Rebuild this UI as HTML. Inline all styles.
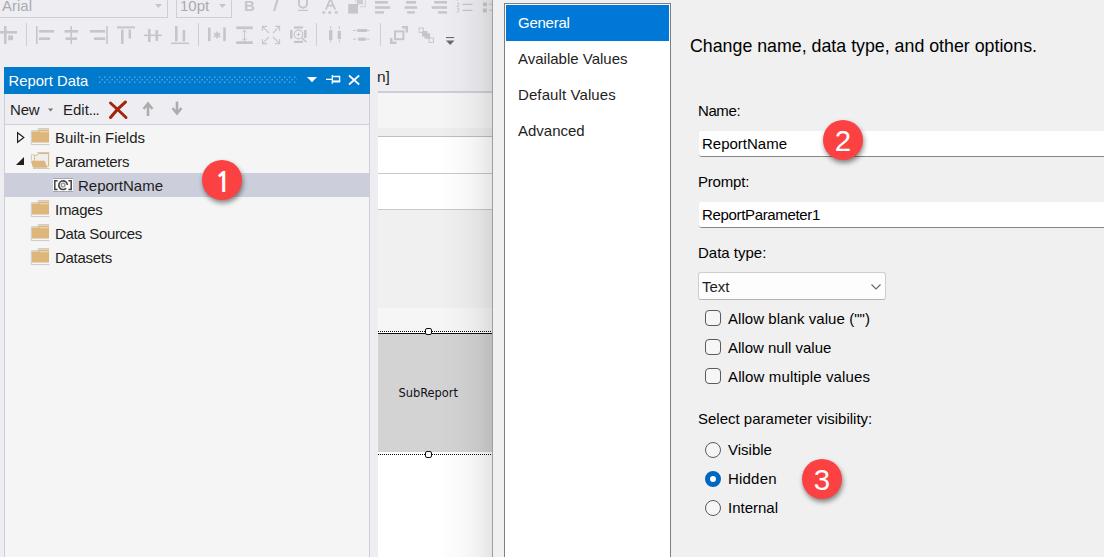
<!DOCTYPE html>
<html><head><meta charset="utf-8">
<style>
*{box-sizing:border-box;margin:0;padding:0}
html,body{width:1104px;height:557px;overflow:hidden;background:#eeeef2;font-family:"Liberation Sans",sans-serif;color:#1e1e1e}
.abs{position:absolute}
#root{position:relative;width:1104px;height:557px;overflow:hidden;background:#eeeef2}
svg{position:absolute;left:0;top:0;overflow:visible}
.combo{position:absolute;border:1px solid #ccceda;color:#a9aab4;white-space:nowrap}
#panel{position:absolute;left:4px;top:67px;width:366px;height:500px;border-left:1px solid #ccceda;border-right:1px solid #ccceda;background:#f5f5f5}
#phead{position:absolute;left:-1px;top:0;width:366px;height:27px;background:#007acc;color:#fff;font-size:14.8px;line-height:29px;padding-left:4.5px;white-space:nowrap}
#ptool{position:absolute;left:0;top:27px;width:364px;height:31px;background:#eeeef2;border-bottom:1px solid #ccceda;font-size:15px}
.row{position:absolute;left:0;width:364px;height:24px;font-size:15px;line-height:24px}
.row span{position:absolute;top:1px;white-space:nowrap}
.sel{background:#cccedb}
#dlg{position:absolute;left:492px;top:-10px;width:640px;height:600px;background:#f0f0f0;border-left:1px solid #a0a0a0}
#list{position:absolute;left:504px;top:3px;width:167px;height:600px;border:1px solid #7a7f8a;background:#fff}
.li{position:absolute;left:1px;width:163px;height:36px;line-height:36px;font-size:15px;padding-left:12px;white-space:nowrap}
.lbl{position:absolute;color:#000;font-size:15px;white-space:nowrap;line-height:18px}
.inp{color:#000;position:absolute;left:699px;width:420px;height:26px;background:#fff;border-bottom:1px solid #868686;border-radius:3px 0 0 3px;font-size:15px;line-height:25px;padding-left:3px;white-space:nowrap}
.cb{position:absolute;left:705px;width:16px;height:16px;border:1px solid #5a5a5a;border-radius:4px;background:#f6f6f6}
.rb{position:absolute;left:705px;width:16px;height:16px;border:1px solid #5a5a5a;border-radius:50%;background:#f6f6f6}
.badge{position:absolute;border-radius:50%;background:#fb4141;color:#fff;text-align:center;box-shadow:1px 3px 5px rgba(0,0,0,.45);font-size:29.5px}
</style></head><body><div id="root">

<!-- top toolbar row 1 -->
<div class="combo" style="left:-2px;top:-6px;width:170px;height:24px;padding-left:4px;font-size:15px;line-height:21px;padding-left:3px">Arial</div>
<div class="combo" style="left:176px;top:-6px;width:56px;height:24px;padding-left:3px;font-size:15px;line-height:21px">10pt</div>
<div class="abs" style="left:244px;top:-4px;font-size:15px;font-weight:bold;color:#c6c6ca;line-height:20px">B</div>

<svg width="500" height="56" viewBox="0 0 500 56">
 <g fill="#c5c5cb" stroke="none">
  <!-- combo arrows -->
  <path d="M155 4h7l-3.5 4z"/><path d="M219 4h7l-3.5 4z"/>
  <!-- I slash -->
  <path d="M276.6 -1h2.2l-3.6 12h-2.2z"/>
  <!-- U -->
  <path d="M299 -1v4.700a4 4 0 0 0 8 0v-4.700" fill="none" stroke="#c5c5cb" stroke-width="1.900"/><rect x="298" y="9.800" width="10" height="1.200"/>
  <!-- A -->
  <path d="M325.800 9.600l4.700-11 4.700 11M327.600 5.600h5.800" fill="none" stroke="#c5c5cb" stroke-width="1.700"/>
  <rect x="322.400" y="11.300" width="2.800" height="2.400"/><rect x="328.400" y="11.300" width="2.800" height="2.400"/><rect x="334.900" y="11.300" width="2.800" height="2.400"/>
  <!-- fill squares -->
  <rect x="348.200" y="4" width="9.800" height="9.600"/>
  <path d="M355.400 -1h10.400v8.200h-6v-1h5v-6.200h-8.400v2.500h-1z" opacity=".75"/><rect x="357" y="-1" width="6" height="5.400" opacity=".85"/>
  <!-- align left -->
  <rect x="375" y="1" width="13" height="2.6"/><rect x="375" y="6.2" width="15.2" height="2.6"/><rect x="375" y="11.2" width="9" height="2.4"/>
  <!-- align center -->
  <rect x="406" y="1" width="10" height="2.6"/><rect x="404.6" y="6.2" width="12.6" height="2.6"/><rect x="407.2" y="11.2" width="7.8" height="2.4"/>
  <!-- align right -->
  <rect x="434.2" y="1" width="12.8" height="2.6"/><rect x="431.6" y="6.2" width="15.4" height="2.6"/><rect x="438" y="11.2" width="9" height="2.4"/>
  <!-- numbered list -->
  <rect x="462.5" y="3.8" width="10" height="1.2"/><rect x="462.5" y="9.8" width="10" height="1.2"/>
  <!-- bullet list -->
  <rect x="483" y="2.6" width="3.8" height="3.6"/><rect x="483" y="8.6" width="3.8" height="3.8"/>
  <rect x="489.5" y="3.8" width="4" height="1.2"/><rect x="489.5" y="9.8" width="4" height="1.2"/>

  <!-- row 2 -->
  <!-- icon 1 partial -->
  <rect x="4" y="26" width="2.6" height="18"/><rect x="0" y="31" width="17" height="2.6"/><rect x="8.2" y="35.4" width="4.8" height="4.8"/>
  <!-- align lefts -->
  <rect x="36" y="26" width="1.6" height="18"/><rect x="39" y="30" width="15" height="2.6"/><rect x="39" y="37.4" width="11" height="2.6"/>
  <!-- align centers -->
  <rect x="70.4" y="26" width="1.6" height="18"/><rect x="64.5" y="30" width="13.5" height="2.6"/><rect x="65.6" y="37.4" width="11.4" height="2.6"/>
  <!-- align rights -->
  <rect x="106.2" y="26" width="1.6" height="18"/><rect x="90" y="30" width="15.2" height="2.6"/><rect x="94" y="37.4" width="11.2" height="2.6"/>
  <!-- align tops -->
  <rect x="117" y="26.4" width="18" height="2"/><rect x="121" y="29.5" width="2.6" height="14.5"/><rect x="128.6" y="29.5" width="2.4" height="9"/>
  <!-- align middles -->
  <rect x="144" y="34.5" width="18" height="1.6"/><rect x="148" y="29" width="2.6" height="13"/><rect x="155.5" y="30" width="2.6" height="11"/>
  <!-- align bottoms -->
  <rect x="175" y="26" width="2.6" height="15.4"/><rect x="182.6" y="30" width="2.6" height="11.4"/><rect x="171" y="42.5" width="18" height="1.6"/>
  <!-- |*| -->
  <rect x="208" y="27.5" width="2.6" height="13.6"/><rect x="223.2" y="27.5" width="2.6" height="13.6"/>
  <!-- I-beam -->
  <rect x="236.2" y="26.4" width="16.6" height="2.8"/><rect x="236.2" y="41.2" width="16.6" height="2.8"/>
  <!-- zoom icon bars -->
  <rect x="294" y="26.4" width="9" height="2.2"/><rect x="294" y="40.8" width="9" height="2.2"/><rect x="290" y="30" width="2.6" height="8.6"/><rect x="304" y="30" width="2.6" height="8"/>
  <!-- distribute h -->
  <rect x="329" y="30" width="3.4" height="10"/><rect x="337.6" y="31" width="3.4" height="8"/>
  <!-- distribute v -->
  <rect x="357.2" y="29" width="9.8" height="3"/><rect x="358.4" y="37.6" width="7.4" height="3.2"/>
  <!-- send back -->
  <rect x="422" y="31" width="5.500" height="5.500"/><rect x="424.600" y="33.200" width="5.500" height="5.500"/>
 </g>
 <g fill="none" stroke="#c5c5cb">
  <!-- separators -->
  <path d="M26.5 23v23M198.5 23v23M316.5 23v23M380.5 23v23" stroke="#ccceda" stroke-width="1"/>
  <!-- asterisk -->
  <path d="M217 31.5v7M213.8 33.2l6.4 3.6M220.2 33.2l-6.4 3.6" stroke-width="1.7"/>
  <!-- I-beam arrow -->
  <path d="M244.5 30v10.5M242.3 32.4l2.2-2.4 2.2 2.4M242.3 38.4l2.2 2.4 2.2-2.4" stroke-width="1"/>
  <!-- expand arrows -->
  <path d="M269 33l-6.4-6.4M262.4 31v-4.6h4.6M273 33l6.4-6.4M275 26.4h4.6v4.6M269 37l-6.4 6.4M262.4 39v4.6h4.6M273 37l6.4 6.4M275 43.6h4.6v-4.6" stroke-width="1.1"/>
  <!-- magnifier -->
  <circle cx="298.5" cy="34.5" r="4.3" stroke-width="1.2"/><path d="M301.8 37.8l4.6 4.4" stroke-width="1.6"/><path d="M296.5 34.5h4M298.5 32.5v4" stroke-width="1"/>
  <!-- distribute dashed lines -->
  <path d="M330.7 26v18M339.3 26v18" stroke-width="1" stroke-dasharray="3 1.5"/>
  <path d="M353 30.5h18M353 39.2h18" stroke-width="1" stroke-dasharray="3 1.5"/>
  <!-- bring to front -->
  <rect x="395" y="31.4" width="8.4" height="7.8" stroke-width="2"/>
  <path d="M402 27.200h4.800v5.300M396.500 42.800h-5.300v-4.800" stroke-width="2.500"/>
  <!-- send back outlines -->
  <rect x="419" y="28" width="4.4" height="4.4" stroke-width="1"/><rect x="429" y="38" width="4.4" height="4.4" stroke-width="1"/>
  <!-- numbered list digits -->
  <path d="M457.300 0v.8M457 3.600c1-1.100 2.600-.4 1.700.9l-1.700 1.900h2.300M457 8.800h2.100l-1.100 1.500c1.700 0 1.500 2.400-1.200 1.700" stroke-width=".9"/>
 </g>
 <!-- overflow -->
 <rect x="446" y="37" width="8.200" height="1.100" fill="#6a6b70"/><path d="M446 40.600h8.400l-4.200 4.400z" fill="#6a6b70"/>
</svg>

<!-- Report Data panel -->
<div id="panel">
  <div id="phead">Report Data</div>
  <div id="ptool"><span class="abs" style="left:5px;top:7px;letter-spacing:-.2px">New</span><span class="abs" style="left:58px;top:7px">Edit<span style="letter-spacing:-.9px">...</span></span></div>
  <div class="row" style="top:58px"><span style="left:50px">Built-in Fields</span></div>
  <div class="row" style="top:82px"><span style="left:50px;letter-spacing:-.35px">Parameters</span></div>
  <div class="row sel" style="top:106px"><span style="left:73px">ReportName</span></div>
  <div class="row" style="top:130px"><span style="left:50px;letter-spacing:-.27px">Images</span></div>
  <div class="row" style="top:154px"><span style="left:50px;letter-spacing:-.33px">Data Sources</span></div>
  <div class="row" style="top:178px"><span style="left:50px;letter-spacing:-.29px">Datasets</span></div>
</div>

<svg width="380" height="300" viewBox="0 0 380 300">
 <defs>
  <pattern id="grip" x="99" y="76" width="5" height="5" patternUnits="userSpaceOnUse">
   <rect x="0" y="0.5" width="1.4" height="1.4" fill="#58aae4"/><rect x="2.5" y="3" width="1.4" height="1.4" fill="#58aae4"/>
  </pattern>
  <g id="folder">
   <path d="M-.2 15.500v-13.700h5.400l1.700-2.200h10.800M-.2 15.600h17.900" fill="none" stroke="#c9c9cc" stroke-width="1"/>
   <path d="M.5 2.600h5.200l1.600-2.200h10.200v13.200h-17z" fill="#dcb67a"/>
   <path d="M8 2.700h9" stroke="#efdcbb" stroke-width="1" fill="none"/>
  </g>
 </defs>
 <!-- grip -->
 <rect x="99" y="76" width="198" height="8" fill="url(#grip)"/>
 <!-- header icons -->
 <path d="M307 77h10l-5 5.2z" fill="#fff"/>
 <path d="M326 79.3h5.6M332.3 75v8.8M333 76.5h6.6v5.2" fill="none" stroke="#fff" stroke-width="1.3"/><rect x="333" y="80.4" width="7.2" height="2.1" fill="#fff"/>
 <path d="M349 75.5l10.2 9M359.2 75.5l-10.2 9" stroke="#fff" stroke-width="1.7" fill="none"/>
 <!-- toolbar icons -->
 <path d="M48 108.500h5.200l-2.600 2.900z" fill="#717171"/>
 <path d="M110.5 103c5 4.500 10 9 15.500 14.500M125.500 102c-5 4-10 9-15 15.500" stroke="#a1260d" stroke-width="3" stroke-linecap="round" fill="none"/>
 <path d="M148 116v-12M143.500 109l4.500-5.500 4.500 5.500" stroke="#adadad" stroke-width="2.600" fill="none"/>
 <path d="M177 101.500v12M172.500 108l4.500 5.500 4.500-5.500" stroke="#adadad" stroke-width="2.600" fill="none"/>
 <!-- expanders -->
 <path d="M17.600 132.700l6.200 4.800-6.200 4.800z" fill="#fff" stroke="#1e1e1e" stroke-width="1.200"/>
 <path d="M24 157v8h-8z" fill="#1e1e1e"/>
 <!-- folders -->
 <use href="#folder" x="31.500" y="129"/>
 <use href="#folder" x="31.500" y="201"/>
 <use href="#folder" x="31.500" y="225"/>
 <use href="#folder" x="31.500" y="249"/>
 <!-- open folder -->
 <path d="M31.300 160v-5.300h2.600M33 168.500h16.500M37 152.500h12.500" fill="none" stroke="#c9c9cc" stroke-width="1"/>
 <path d="M34.300 155.200h2.900l1.400-1.700h10v12.800h-14.300z" fill="#f0eeea" stroke="#dcb67a" stroke-width="1"/>
 <path d="M30.800 160.700h13.900l2.500 7h-14.200z" fill="#dcb67a"/>
 <!-- param icon -->
 <rect x="53" y="178.500" width="20" height="13" fill="#fff"/><path d="M53 178.500h20M53 191.500h20" stroke="#a4a6b0" stroke-width="1"/>
 <path d="M57.600 180.700h-2.800v8.800h2.800M68.400 180.700h2.800v8.800h-2.800" fill="none" stroke="#424242" stroke-width="1.500"/>
 <path d="M66.200 188.200a4.300 4.300 0 1 1 1.200-3.200" fill="none" stroke="#424242" stroke-width="1.600"/>
 <circle cx="63.100" cy="185" r="2.600" fill="#9c9c9c"/><circle cx="63.100" cy="185.100" r="1.100" fill="#fff"/>
</svg>

<!-- middle designer -->
<div class="abs" style="left:377px;top:68px;font-size:15.5px;line-height:18px">n]</div>
<div class="abs" style="left:378px;top:91px;width:114px;height:2px;background:#ccceda"></div>
<div class="abs" style="left:378px;top:93px;width:114px;height:35px;background:#f5f5f5"></div>
<div class="abs" style="left:378px;top:128px;width:114px;height:8px;background:#eeeeee"></div>
<div class="abs" style="left:378px;top:136px;width:114px;height:74px;background:#fff;border-top:1px solid #bdbdbd;border-bottom:1px solid #c8c8c8"></div>
<div class="abs" style="left:378px;top:173px;width:114px;height:1px;background:#c8c8c8"></div>
<div class="abs" style="left:378px;top:210px;width:114px;height:98px;background:#f0f0f0"></div>
<div class="abs" style="left:378px;top:308px;width:114px;height:24px;background:#f6f6f6"></div>
<div class="abs" style="left:378px;top:332px;width:114px;height:1px;background:#fff"></div>
<div class="abs" style="left:378px;top:331px;width:114px;height:1px;background:repeating-linear-gradient(90deg,#111 0 1px,transparent 1px 2px)"></div>
<div class="abs" style="left:378px;top:333px;width:114px;height:1px;background:#111"></div>
<div class="abs" style="left:378px;top:334px;width:114px;height:118px;background:#d3d3d3"></div>
<div class="abs" style="left:378px;top:452px;width:114px;height:110px;background:#fff"></div>
<div class="abs" style="left:378px;top:454px;width:114px;height:1px;background:repeating-linear-gradient(90deg,#111 0 1px,transparent 1px 2px)"></div>
<div class="abs" style="left:425px;top:328px;width:7px;height:7px;background:#fff;border:1px solid #111;border-radius:2px"></div>
<div class="abs" style="left:425px;top:451px;width:7px;height:7px;background:#fff;border:1px solid #111;border-radius:2px"></div>
<div class="abs lbl2" style="left:398.500px;top:385px;font-size:12.700px;line-height:16px;font-family:'DejaVu Sans Condensed','DejaVu Sans',sans-serif;color:#101018;white-space:nowrap">SubReport</div>

<!-- dialog shadow -->
<div class="abs" style="left:440px;top:0;width:52px;height:557px;background:linear-gradient(90deg,rgba(0,0,0,0),rgba(0,0,0,.02) 40%,rgba(0,0,0,.055) 75%,rgba(0,0,0,.105))"></div>
<div id="dlg"></div>
<div id="list">
  <div class="li" style="top:1px;background:#0078d7;color:#fff;letter-spacing:-.25px">General</div>
  <div class="li" style="top:37px">Available Values</div>
  <div class="li" style="top:73px;letter-spacing:.1px">Default Values</div>
  <div class="li" style="top:109px">Advanced</div>
</div>
<div class="lbl" style="left:690px;top:36px;font-size:17.8px;line-height:20px">Change name, data type, and other options.</div>
<div class="lbl" style="left:698px;top:102px;letter-spacing:-.4px">Name:</div>
<div class="inp" style="top:131px">ReportName</div>
<div class="lbl" style="left:698px;top:173px;letter-spacing:-.2px">Prompt:</div>
<div class="inp" style="top:202px;letter-spacing:-.34px">ReportParameter1</div>
<div class="lbl" style="left:698px;top:244px">Data type:</div>
<div class="abs" style="left:698px;top:272px;width:188px;height:28px;background:#fdfdfd;border:1px solid #cfcfcf;border-bottom-color:#b4b4b4;border-radius:3px;font-size:15px;line-height:27px;padding-left:3px">Text</div>
<svg width="1104" height="557" viewBox="0 0 1104 557"><path d="M871.500 284.500l4.500 4.500 4.500-4.500" fill="none" stroke="#666" stroke-width="1.100"/></svg>
<div class="cb" style="top:310px"></div><div class="lbl" style="left:728px;top:310px;letter-spacing:.06px">Allow blank value ("")</div>
<div class="cb" style="top:339px"></div><div class="lbl" style="left:728px;top:339px">Allow null value</div>
<div class="cb" style="top:368px"></div><div class="lbl" style="left:728px;top:368px;letter-spacing:.14px">Allow multiple values</div>
<div class="lbl" style="left:698px;top:410px">Select parameter visibility:</div>
<div class="rb" style="top:442px"></div><div class="lbl" style="left:728px;top:441px">Visible</div>
<div class="rb" style="top:471px;border:5.500px solid #0067c0;background:#fff"></div><div class="lbl" style="left:728px;top:470px;letter-spacing:.2px">Hidden</div>
<div class="rb" style="top:500px"></div><div class="lbl" style="left:728px;top:499px">Internal</div>

<!-- badges -->
<div class="badge" style="left:202px;top:160px;width:40px;height:40px;line-height:45px;font-family:'NanumGothic','Liberation Sans',sans-serif;font-size:27.500px;font-weight:bold;text-indent:2px">1</div>
<div class="badge" style="left:823px;top:120px;width:40px;height:40px;line-height:41px">2</div>
<div class="badge" style="left:802px;top:459px;width:40px;height:40px;line-height:41px">3</div>

</div></body></html>
